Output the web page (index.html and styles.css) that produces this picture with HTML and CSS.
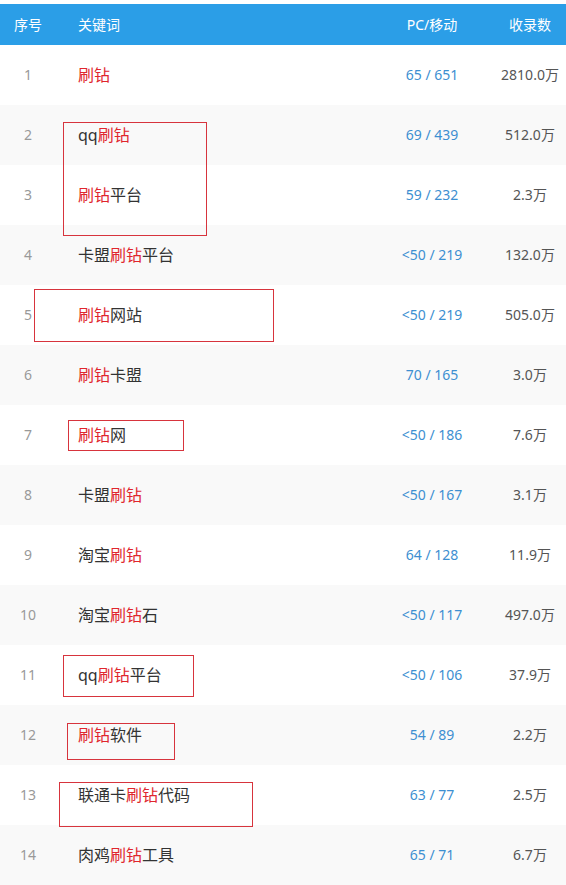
FILE: index.html
```html
<!DOCTYPE html>
<html lang="zh-CN">
<head>
<meta charset="utf-8">
<title>关键词</title>
<link rel="stylesheet" href="styles.css">
</head>
<body>
<div class="sheet">
  <div class="table">
    <div class="row head">
      <div class="c-no">序号</div>
      <div class="c-kw">关键词</div>
      <div class="c-pc">PC/移动</div>
      <div class="c-cnt">收录数</div>
    </div>
    <div class="row"><div class="c-no">1</div><div class="c-kw"><em>刷钻</em></div><div class="c-pc">65 / 651</div><div class="c-cnt">2810.0万</div></div>
    <div class="row"><div class="c-no">2</div><div class="c-kw">qq<em>刷钻</em></div><div class="c-pc">69 / 439</div><div class="c-cnt">512.0万</div></div>
    <div class="row"><div class="c-no">3</div><div class="c-kw"><em>刷钻</em>平台</div><div class="c-pc">59 / 232</div><div class="c-cnt">2.3万</div></div>
    <div class="row"><div class="c-no">4</div><div class="c-kw">卡盟<em>刷钻</em>平台</div><div class="c-pc">&lt;50 / 219</div><div class="c-cnt">132.0万</div></div>
    <div class="row"><div class="c-no">5</div><div class="c-kw"><em>刷钻</em>网站</div><div class="c-pc">&lt;50 / 219</div><div class="c-cnt">505.0万</div></div>
    <div class="row"><div class="c-no">6</div><div class="c-kw"><em>刷钻</em>卡盟</div><div class="c-pc">70 / 165</div><div class="c-cnt">3.0万</div></div>
    <div class="row"><div class="c-no">7</div><div class="c-kw"><em>刷钻</em>网</div><div class="c-pc">&lt;50 / 186</div><div class="c-cnt">7.6万</div></div>
    <div class="row"><div class="c-no">8</div><div class="c-kw">卡盟<em>刷钻</em></div><div class="c-pc">&lt;50 / 167</div><div class="c-cnt">3.1万</div></div>
    <div class="row"><div class="c-no">9</div><div class="c-kw">淘宝<em>刷钻</em></div><div class="c-pc">64 / 128</div><div class="c-cnt">11.9万</div></div>
    <div class="row"><div class="c-no">10</div><div class="c-kw">淘宝<em>刷钻</em>石</div><div class="c-pc">&lt;50 / 117</div><div class="c-cnt">497.0万</div></div>
    <div class="row"><div class="c-no">11</div><div class="c-kw">qq<em>刷钻</em>平台</div><div class="c-pc">&lt;50 / 106</div><div class="c-cnt">37.9万</div></div>
    <div class="row"><div class="c-no">12</div><div class="c-kw"><em>刷钻</em>软件</div><div class="c-pc">54 / 89</div><div class="c-cnt">2.2万</div></div>
    <div class="row"><div class="c-no">13</div><div class="c-kw">联通卡<em>刷钻</em>代码</div><div class="c-pc">63 / 77</div><div class="c-cnt">2.5万</div></div>
    <div class="row"><div class="c-no">14</div><div class="c-kw">肉鸡<em>刷钻</em>工具</div><div class="c-pc">65 / 71</div><div class="c-cnt">6.7万</div></div>
  </div>
  <div class="mark" style="left:63px;top:122px;width:144px;height:114px"></div>
  <div class="mark" style="left:34px;top:289px;width:240px;height:53px"></div>
  <div class="mark" style="left:68px;top:420px;width:116px;height:31px"></div>
  <div class="mark" style="left:63px;top:655px;width:131px;height:42px"></div>
  <div class="mark" style="left:67px;top:723px;width:108px;height:37px"></div>
  <div class="mark" style="left:59px;top:782px;width:194px;height:45px"></div>
</div>
</body>
</html>
```
FILE: styles.css
```css
html, body {
  margin: 0;
  padding: 0;
  background: #ffffff;
}
body {
  font-family: "Noto Sans", "Noto Sans CJK SC", sans-serif;
  width: 566px;
  height: 885px;
  overflow: hidden;
}
.sheet {
  position: relative;
  padding-top: 4px;
}
.table {
  display: flex;
  flex-direction: column;
}
.row {
  display: grid;
  grid-template-columns: 56px 314px 124px 72px;
  align-items: center;
  box-sizing: border-box;
  height: 60px;
  padding-bottom: 2px;
  font-size: 14px;
  color: #555555;
}
.row:nth-child(odd) {
  background: #f9f9f9;
}
.row.head {
  height: 41px;
  background: #2b9ee7;
  color: #ffffff;
}
.c-no {
  text-align: center;
  color: #999999;
}
.c-kw {
  padding-left: 22px;
  font-size: 16px;
  color: #333333;
}
.c-kw em {
  font-style: normal;
  color: #e0262d;
}
.c-pc {
  text-align: center;
  color: #3d8fd1;
}
.c-cnt {
  text-align: center;
  color: #555555;
  white-space: nowrap;
}
.head .c-no, .head .c-kw, .head .c-pc, .head .c-cnt {
  color: #ffffff;
  font-size: 14px;
}
.mark {
  position: absolute;
  box-sizing: border-box;
  border: 1px solid #d7343d;
}
```
